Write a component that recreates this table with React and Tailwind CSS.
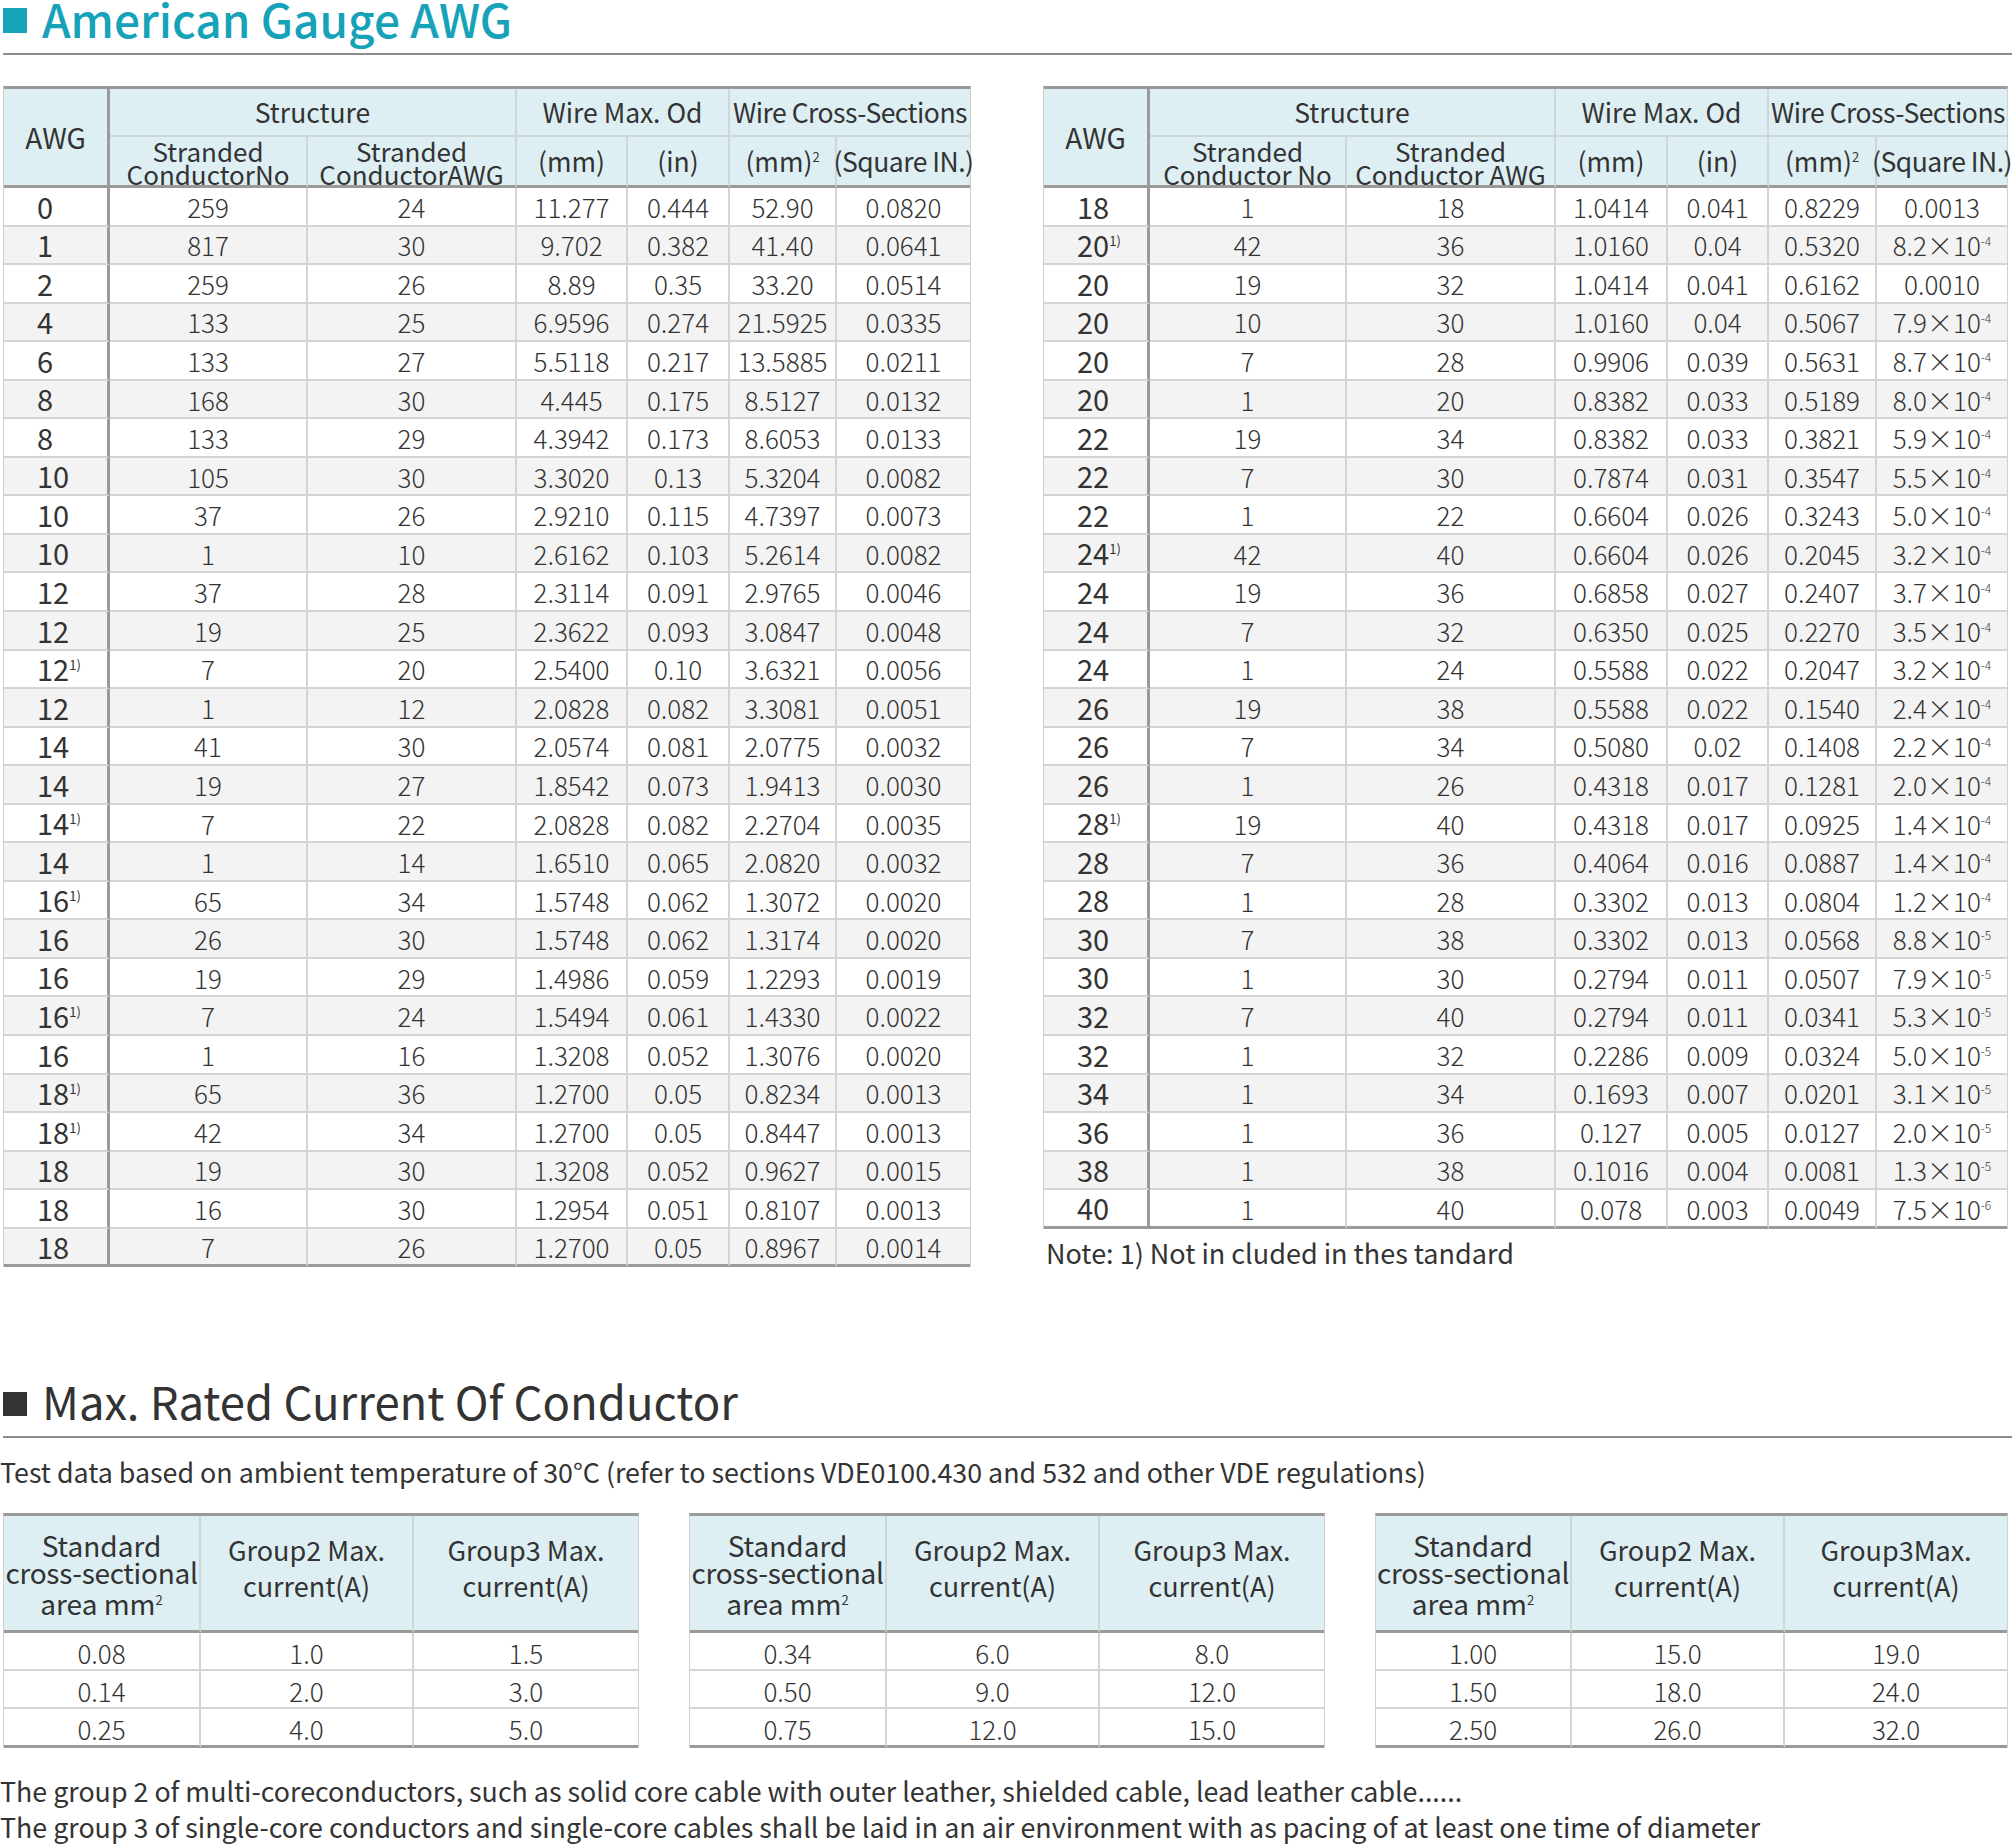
import React from "react";

const HEAD_BG = "bg-[#ddeff3]";

// "*" after AWG = footnote 1), "e" in last column = power of ten
const LEFT_ROWS = [
  ["0", "259", "24", "11.277", "0.444", "52.90", "0.0820"],
  ["1", "817", "30", "9.702", "0.382", "41.40", "0.0641"],
  ["2", "259", "26", "8.89", "0.35", "33.20", "0.0514"],
  ["4", "133", "25", "6.9596", "0.274", "21.5925", "0.0335"],
  ["6", "133", "27", "5.5118", "0.217", "13.5885", "0.0211"],
  ["8", "168", "30", "4.445", "0.175", "8.5127", "0.0132"],
  ["8", "133", "29", "4.3942", "0.173", "8.6053", "0.0133"],
  ["10", "105", "30", "3.3020", "0.13", "5.3204", "0.0082"],
  ["10", "37", "26", "2.9210", "0.115", "4.7397", "0.0073"],
  ["10", "1", "10", "2.6162", "0.103", "5.2614", "0.0082"],
  ["12", "37", "28", "2.3114", "0.091", "2.9765", "0.0046"],
  ["12", "19", "25", "2.3622", "0.093", "3.0847", "0.0048"],
  ["12*", "7", "20", "2.5400", "0.10", "3.6321", "0.0056"],
  ["12", "1", "12", "2.0828", "0.082", "3.3081", "0.0051"],
  ["14", "41", "30", "2.0574", "0.081", "2.0775", "0.0032"],
  ["14", "19", "27", "1.8542", "0.073", "1.9413", "0.0030"],
  ["14*", "7", "22", "2.0828", "0.082", "2.2704", "0.0035"],
  ["14", "1", "14", "1.6510", "0.065", "2.0820", "0.0032"],
  ["16*", "65", "34", "1.5748", "0.062", "1.3072", "0.0020"],
  ["16", "26", "30", "1.5748", "0.062", "1.3174", "0.0020"],
  ["16", "19", "29", "1.4986", "0.059", "1.2293", "0.0019"],
  ["16*", "7", "24", "1.5494", "0.061", "1.4330", "0.0022"],
  ["16", "1", "16", "1.3208", "0.052", "1.3076", "0.0020"],
  ["18*", "65", "36", "1.2700", "0.05", "0.8234", "0.0013"],
  ["18*", "42", "34", "1.2700", "0.05", "0.8447", "0.0013"],
  ["18", "19", "30", "1.3208", "0.052", "0.9627", "0.0015"],
  ["18", "16", "30", "1.2954", "0.051", "0.8107", "0.0013"],
  ["18", "7", "26", "1.2700", "0.05", "0.8967", "0.0014"],
];

const RIGHT_ROWS = [
  ["18", "1", "18", "1.0414", "0.041", "0.8229", "0.0013"],
  ["20*", "42", "36", "1.0160", "0.04", "0.5320", "8.2e-4"],
  ["20", "19", "32", "1.0414", "0.041", "0.6162", "0.0010"],
  ["20", "10", "30", "1.0160", "0.04", "0.5067", "7.9e-4"],
  ["20", "7", "28", "0.9906", "0.039", "0.5631", "8.7e-4"],
  ["20", "1", "20", "0.8382", "0.033", "0.5189", "8.0e-4"],
  ["22", "19", "34", "0.8382", "0.033", "0.3821", "5.9e-4"],
  ["22", "7", "30", "0.7874", "0.031", "0.3547", "5.5e-4"],
  ["22", "1", "22", "0.6604", "0.026", "0.3243", "5.0e-4"],
  ["24*", "42", "40", "0.6604", "0.026", "0.2045", "3.2e-4"],
  ["24", "19", "36", "0.6858", "0.027", "0.2407", "3.7e-4"],
  ["24", "7", "32", "0.6350", "0.025", "0.2270", "3.5e-4"],
  ["24", "1", "24", "0.5588", "0.022", "0.2047", "3.2e-4"],
  ["26", "19", "38", "0.5588", "0.022", "0.1540", "2.4e-4"],
  ["26", "7", "34", "0.5080", "0.02", "0.1408", "2.2e-4"],
  ["26", "1", "26", "0.4318", "0.017", "0.1281", "2.0e-4"],
  ["28*", "19", "40", "0.4318", "0.017", "0.0925", "1.4e-4"],
  ["28", "7", "36", "0.4064", "0.016", "0.0887", "1.4e-4"],
  ["28", "1", "28", "0.3302", "0.013", "0.0804", "1.2e-4"],
  ["30", "7", "38", "0.3302", "0.013", "0.0568", "8.8e-5"],
  ["30", "1", "30", "0.2794", "0.011", "0.0507", "7.9e-5"],
  ["32", "7", "40", "0.2794", "0.011", "0.0341", "5.3e-5"],
  ["32", "1", "32", "0.2286", "0.009", "0.0324", "5.0e-5"],
  ["34", "1", "34", "0.1693", "0.007", "0.0201", "3.1e-5"],
  ["36", "1", "36", "0.127", "0.005", "0.0127", "2.0e-5"],
  ["38", "1", "38", "0.1016", "0.004", "0.0081", "1.3e-5"],
  ["40", "1", "40", "0.078", "0.003", "0.0049", "7.5e-6"],
];

const CURRENT_TABLES = [
  {
    g3: "Group3 Max.",
    cols: "grid-cols-[197px_213px_224px]",
    rows: [["0.08", "1.0", "1.5"], ["0.14", "2.0", "3.0"], ["0.25", "4.0", "5.0"]],
  },
  {
    g3: "Group3 Max.",
    cols: "grid-cols-[197px_213px_224px]",
    rows: [["0.34", "6.0", "8.0"], ["0.50", "9.0", "12.0"], ["0.75", "12.0", "15.0"]],
  },
  {
    g3: "Group3Max.",
    cols: "grid-cols-[196px_213px_222px]",
    rows: [["1.00", "15.0", "19.0"], ["1.50", "18.0", "24.0"], ["2.50", "26.0", "32.0"]],
  },
];

function Awg({ value }) {
  const note = value.endsWith("*");
  return (
    <span>
      {note ? value.slice(0, -1) : value}
      {note && <span className="text-[13px] align-super">1)</span>}
    </span>
  );
}

function Value({ value }) {
  if (!value.includes("e")) return <span>{value}</span>;
  const [base, exp] = value.split("e");
  return (
    <span>
      {base}×10<span className="text-[12px] align-super">{exp}</span>
    </span>
  );
}

function GaugeTable({ rows, cols, split }) {
  const head = `${HEAD_BG} flex items-center justify-center text-[26.5px] text-[#333]`;
  const sub = "border-r-2 border-r-[#cfd6d8] border-b-[3px] border-b-[#9a9a9a]";
  return (
    <div className={`grid ${cols} grid-rows-[48px_51px] auto-rows-[38.55px] border-t-[3px] border-t-[#9a9a9a] border-x border-x-[#d0d0d0]`}>
      <div className={`${head} text-[28px] row-span-2 border-r-[3px] border-b-[3px] border-[#9a9a9a]`}>AWG</div>
      <div className={`${head} col-span-2 border-r-2 border-b-2 border-[#cfd6d8]`}>Structure</div>
      <div className={`${head} col-span-2 border-r-2 border-b-2 border-[#cfd6d8]`}>Wire Max. Od</div>
      <div className={`${head} col-span-2 border-b-2 border-[#cfd6d8] whitespace-nowrap tracking-[-0.5px]`}>Wire Cross-Sections</div>

      <div className={`${head} text-[26px] flex-col leading-[23px] pt-[2px] ${sub}`}>
        <span>Stranded</span>
        <span className="whitespace-nowrap">{split ? "Conductor No" : "ConductorNo"}</span>
      </div>
      <div className={`${head} text-[26px] flex-col leading-[23px] pt-[2px] ${sub}`}>
        <span>Stranded</span>
        <span className="whitespace-nowrap">{split ? "Conductor AWG" : "ConductorAWG"}</span>
      </div>
      <div className={`${head} ${sub}`}>(mm)</div>
      <div className={`${head} ${sub}`}>(in)</div>
      <div className={`${head} ${sub}`}>
        <span>(mm)<span className="text-[13px] align-super">2</span></span>
      </div>
      <div className={`${head} text-[25px] border-b-[3px] border-b-[#9a9a9a] whitespace-nowrap tracking-[-0.5px]`}>(Square IN.)</div>

      {rows.map((row, i) => {
        const bg = i % 2 === 1 ? "bg-[#f3f3f3]" : "bg-white";
        const last = i === rows.length - 1;
        const bottom = last ? "border-b-[3px] border-b-[#9a9a9a]" : "border-b-2 border-b-[#d4d4d4]";
        return row.map((cell, j) => {
          if (j === 0) {
            return (
              <div
                key={`${i}-${j}`}
                className={`${bg} ${bottom} border-r-[3px] border-r-[#9a9a9a] flex items-center pl-[33px] text-[29px] text-[#333]`}
              >
                <Awg value={cell} />
              </div>
            );
          }
          const side = j === row.length - 1 ? "" : "border-r-2 border-r-[#d4d4d4]";
          return (
            <div
              key={`${i}-${j}`}
              className={`${bg} ${bottom} ${side} flex items-center justify-center text-[26px] font-light text-[#333]`}
            >
              {j === row.length - 1 ? <Value value={cell} /> : cell}
            </div>
          );
        });
      })}
    </div>
  );
}

function CurrentTable({ table }) {
  const head = `${HEAD_BG} flex flex-col items-center justify-center text-center text-[27px] text-[#333] border-b-[3px] border-b-[#9a9a9a]`;
  return (
    <div className={`grid ${table.cols} grid-rows-[117px] auto-rows-[38.33px] border-t-[3px] border-t-[#9a9a9a] border-x border-x-[#d0d0d0]`}>
      <div className={`${head} text-[28px] leading-[27px] pt-[4px] border-r-2 border-r-[#cfd6d8] whitespace-nowrap`}>
        <span>Standard</span>
        <span className="tracking-[-0.3px]">cross-sectional</span>
        <span>area mm<span className="text-[13px] align-super">2</span></span>
      </div>
      <div className={`${head} leading-[36px] pb-[10px] border-r-2 border-r-[#cfd6d8]`}>
        <span>Group2 Max.</span>
        <span>current(A)</span>
      </div>
      <div className={`${head} leading-[36px] pb-[10px]`}>
        <span>{table.g3}</span>
        <span>current(A)</span>
      </div>
      {table.rows.map((row, i) => {
        const last = i === table.rows.length - 1;
        const bottom = last ? "border-b-[3px] border-b-[#9a9a9a]" : "border-b-2 border-b-[#d4d4d4]";
        return row.map((cell, j) => (
          <div
            key={`${i}-${j}`}
            className={`${bottom} ${j < 2 ? "border-r-2 border-r-[#d4d4d4]" : ""} flex items-center justify-center pt-[3px] text-[26px] font-light text-[#333]`}
          >
            {cell}
          </div>
        ));
      })}
    </div>
  );
}

export default function App() {
  return (
    <div className="w-[2012px] h-[1845px] overflow-hidden bg-white font-['Noto_Sans_CJK_SC','Noto_Sans',sans-serif] text-[#333]">
      {/* American Gauge AWG */}
      <div className="ml-[3px] h-[55px] flex items-start border-b-2 border-[#8c8c8c]">
        <div className="mt-[8px] w-[24px] h-[25px] bg-[#16a2b8]" />
        <h1 className="ml-[15px] text-[46px] leading-[36px] font-medium text-[#16a2b8] whitespace-nowrap">
          American Gauge AWG
        </h1>
      </div>

      <div className="mt-[31px] ml-[3px] flex items-start gap-[72px]">
        <div className="w-[968px]">
          <GaugeTable rows={LEFT_ROWS} cols="grid-cols-[106px_198px_209px_111px_102px_107px_133px]" />
        </div>
        <div className="w-[965px]">
          <GaugeTable rows={RIGHT_ROWS} split cols="grid-cols-[106px_197px_209px_112px_101px_108px_130px]" />
          <p className="mt-[6px] ml-[3px] text-[27px] leading-[36px] text-[#333]">
            Note: 1) Not in cluded in thes tandard
          </p>
        </div>
      </div>

      {/* Max. Rated Current Of Conductor */}
      <div className="mt-[113px] ml-[3px] h-[54px] flex items-start border-b-2 border-[#8c8c8c]">
        <div className="mt-[8px] w-[24px] h-[24px] bg-[#333]" />
        <h2 className="ml-[15px] text-[45.5px] leading-[32px] text-[#333] whitespace-nowrap">
          Max. Rated Current Of Conductor
        </h2>
      </div>

      <p className="mt-[16px] text-[26.8px] leading-[36px] text-[#333] whitespace-nowrap">
        Test data based on ambient temperature of 30°C (refer to sections VDE0100.430 and 532 and other VDE regulations)
      </p>

      <div className="mt-[23px] ml-[3px] flex items-start gap-[50px]">
        {CURRENT_TABLES.map((t, i) => (
          <CurrentTable key={i} table={t} />
        ))}
      </div>

      <div className="mt-[25px] text-[26.8px] leading-[36px] text-[#333] whitespace-nowrap">
        <p>The group 2 of multi-coreconductors, such as solid core cable with outer leather, shielded cable, lead leather cable......</p>
        <p>The group 3 of single-core conductors and single-core cables shall be laid in an air environment with as pacing of at least one time of diameter</p>
      </div>
    </div>
  );
}
